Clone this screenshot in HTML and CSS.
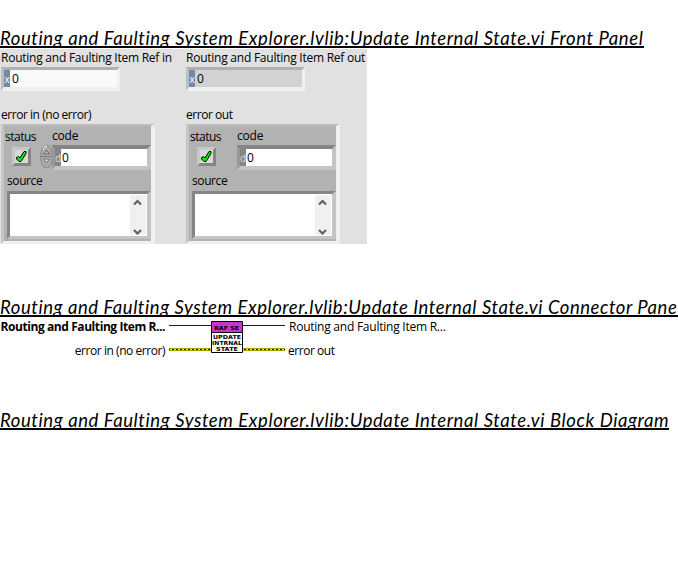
FILE: index.html
```html
<!DOCTYPE html>
<html lang="en">
<head>
<meta charset="utf-8">
<title>Update Internal State.vi</title>
<link rel="stylesheet" href="styles.css">
</head>
<body>
<h2 class="title front"><span>Routing and Faulting System Explorer.lvlib:Update Internal State.vi Front Panel</span></h2>
<section class="panel">
  <div class="column">
    <div class="label ref-in">Routing and Faulting Item Ref in</div>
    <div class="field ref"><span class="radix">x</span><span class="value">0</span></div>
    <div class="label error-in">error in (no error)</div>
    <div class="cluster">
      <div class="captions"><span class="status">status</span><span class="code">code</span></div>
      <div class="controls">
        <div class="led"><svg width="13" height="13" viewBox="0 0 13 13"><path d="M1.5 7.5l2-1 1.5 1.5 4-6.5h2v2L6 11.5H4L1.5 9z" fill="#00f000" stroke="#000"/></svg></div>
        <div class="spin"><svg width="13" height="25" viewBox="0 0 13 25"><ellipse cx="6.5" cy="12.5" rx="5.8" ry="11.5" fill="#ababab" stroke="#858585"/><path d="M3 6l2-4h2" fill="none" stroke="#eee"/><path d="M3.5 10l3-4 3 4z" fill="#bbb" stroke="#666"/><path d="M1 12.5h11" stroke="#777"/><path d="M3.5 15l3 4 3-4z" fill="#ccc" stroke="#777"/></svg></div>
        <div class="field number"><span class="radix">d</span><span class="value">0</span></div>
      </div>
      <div class="label source-label">source</div>
      <div class="field source"><div class="scroll"><svg width="16" height="40" viewBox="0 0 16 40"><path d="M4 9.5L7.5 6 11 9.5M4 35l3.5 3.5L11 35" fill="none" stroke="#606060" stroke-width="2.2"/></svg></div></div>
    </div>
  </div>
  <div class="column">
    <div class="label ref-out">Routing and Faulting Item Ref out</div>
    <div class="field ref readonly"><span class="radix">x</span><span class="value">0</span></div>
    <div class="label error-out">error out</div>
    <div class="cluster">
      <div class="captions"><span class="status">status</span><span class="code">code</span></div>
      <div class="controls">
        <div class="led"><svg width="13" height="13" viewBox="0 0 13 13"><path d="M1.5 7.5l2-1 1.5 1.5 4-6.5h2v2L6 11.5H4L1.5 9z" fill="#00f000" stroke="#000"/></svg></div>
        <div class="spin"></div>
        <div class="field number"><span class="radix">d</span><span class="value">0</span></div>
      </div>
      <div class="label source-label">source</div>
      <div class="field source"><div class="scroll"><svg width="16" height="40" viewBox="0 0 16 40"><path d="M4 9.5L7.5 6 11 9.5M4 35l3.5 3.5L11 35" fill="none" stroke="#606060" stroke-width="2.2"/></svg></div></div>
    </div>
  </div>
</section>
<h2 class="title connector"><span>Routing and Faulting System Explorer.lvlib:Update Internal State.vi Connector Pane</span></h2>
<section class="pane">
  <div class="inputs"><div class="terminal strong">Routing and Faulting Item R...</div><div class="terminal error-term">error in (no error)</div></div>
  <svg class="wiring" width="116" height="36" viewBox="0 0 116 36">
    <path d="M0 6.5h116" stroke="#0000ff"/>
    <path d="M0 30.5h116" stroke="#202000" stroke-width="3"/>
    <path d="M0 29.5h116M0 31.5h116" stroke="#a0a000"/>
    <path d="M1 30.5h115" stroke="#ffff00" stroke-dasharray="2 2"/>
    <path d="M42.5 2.5h31v31h-31z" fill="#fff" stroke="#000"/>
    <path d="M43 3h30v10H43z" fill="#cc33cc"/>
    <path d="M43 13.5h30" stroke="#000"/>
    <g class="glyphs">
      <text x="45" y="10.5" textLength="25" lengthAdjust="spacingAndGlyphs">RAF SE</text>
      <text x="44" y="20" textLength="28" lengthAdjust="spacingAndGlyphs">UPDATE</text>
      <text x="43" y="26" textLength="30" lengthAdjust="spacingAndGlyphs">INTRNAL</text>
      <text x="47" y="32" textLength="22" lengthAdjust="spacingAndGlyphs">STATE</text>
    </g>
  </svg>
  <div class="outputs"><div class="terminal item-out">Routing and Faulting Item R...</div><div class="terminal error-term">error out</div></div>
</section>
<h2 class="title diagram"><span>Routing and Faulting System Explorer.lvlib:Update Internal State.vi Block Diagram</span></h2>
</body>
</html>
```
FILE: styles.css
```css
* { box-sizing: border-box; }
body { margin: 0; padding-top: 26px; height: 571px; overflow: hidden; background: #fff; color: #000; font: 12px/16px "Open Sans", "Noto Sans", sans-serif; letter-spacing: -0.24px; }
.title { margin: 0; height: 22px; overflow: hidden; border-bottom: 2px solid #000; font: italic 400 18.5px/25px Lato, sans-serif; letter-spacing: 0.58px; white-space: nowrap; }
.front { width: 644px; }
.connector { width: 678px; margin-top: 51px; letter-spacing: 0.55px; }
.diagram { width: 669px; margin-top: 37px; }
.panel { display: flex; width: 367px; height: 195px; margin-top: 1px; background: #e1e1e1; }
.column { width: 185px; padding-left: 1px; flex: none; }
.label { height: 16px; white-space: nowrap; }
.ref-in, .ref-out { height: 18px; padding-top: 1px; }
.error-in, .error-out { height: 33px; padding-top: 16px; letter-spacing: -0.46px; }
.field { display: flex; border-style: solid; background: #fff; line-height: 17px; }
.ref { width: 119px; height: 24px; border-width: 3px 3px 4px; border-color: #b0b0b0 #f0f0f0 #f0f0f0 #bebebe; background: #fafafa; }
.readonly { background: #d2d2d2; }
.radix { width: 6px; background: #7488a8; color: #fff; font-size: 10px; line-height: 18px; overflow: hidden; text-align: center; }
.value { padding-left: 2px; }
.cluster { width: 154px; height: 120px; border-style: solid; border-width: 2px 4px 3px 3px; border-color: #bcbcbc #f0f0f0 #f0f0f0 #c6c6c6; background: #b2b2b2; }
.captions { display: flex; height: 19px; line-height: 17px; }
.status { width: 48px; padding: 2px 0 0 1px; letter-spacing: -0.5px; }
.code { padding-top: 1px; letter-spacing: -0.2px; }
.controls { display: flex; height: 26px; }
.led { width: 19px; height: 19px; margin: 2px 9px 0 8px; border: 3px solid; border-color: #c8c8c8 #858585 #858585 #c8c8c8; background: #d8d8d8; }
.led svg, .spin svg, .scroll svg { display: block; }
.spin { width: 12px; height: 25px; margin-top: -1px; }
.number { width: 99px; height: 25px; border-width: 4px 4px 4px 3px; border-color: #858585 #c4c4c4 #c4c4c4 #999; }
.number .radix { background: #858585; color: #ddd; }
.number .value { padding-left: 1px; }
.source-label { height: 20px; padding: 2px 0 0 3px; letter-spacing: -0.4px; }
.source { width: 144px; height: 48px; margin-left: 3px; border-width: 3px 4px 3px 3px; border-color: #858585 #c4c4c4 #c4c4c4 #858585; justify-content: flex-end; padding: 1px; }
.scroll { width: 16px; height: 40px; background: #f0f0f0; }
.pane { display: flex; height: 54px; padding-top: 2px; }
.inputs { width: 169px; padding-right: 4px; text-align: right; }
.terminal { height: 24px; line-height: 15px; white-space: nowrap; }
.strong { font-weight: 700; letter-spacing: -0.42px; }
.error-term { letter-spacing: -0.45px; }
.wiring { flex: none; }
.outputs { padding-left: 3px; }
.item-out { padding-left: 1px; }
.glyphs { font: 700 5.5px/1 "DejaVu Sans", sans-serif; letter-spacing: 0; }
```
